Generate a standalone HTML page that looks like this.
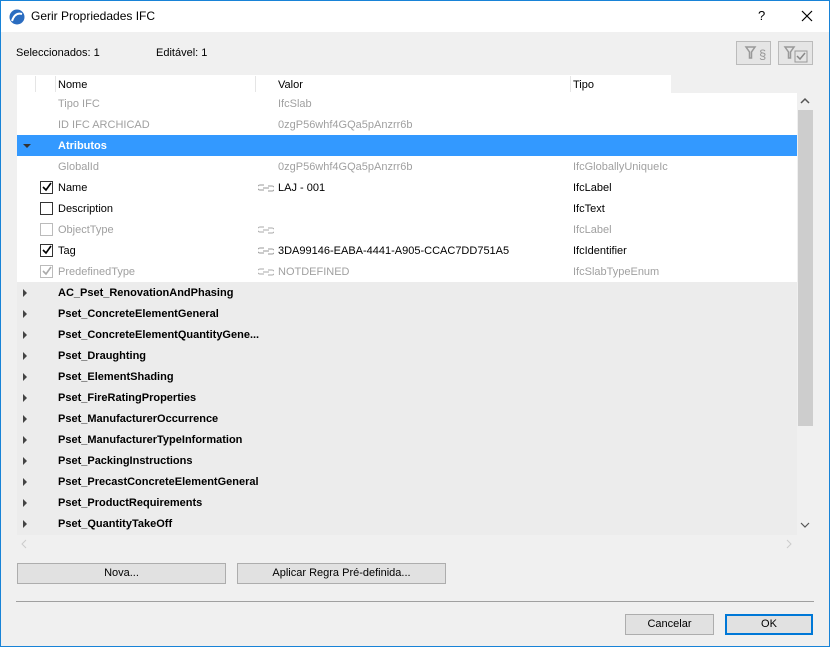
<!DOCTYPE html>
<html><head><meta charset="utf-8"><style>
*{box-sizing:border-box;margin:0;padding:0}
body{width:830px;height:647px;overflow:hidden;font-family:"Liberation Sans",sans-serif;font-size:11px;color:#000;background:#f0f0f0;position:relative}
.win{position:absolute;left:0;top:0;width:830px;height:647px;border:1px solid #1883d7;background:#f0f0f0}
.title{position:absolute;left:0;top:0;width:828px;height:31px;background:#fff}
.abs{position:absolute}
.row{position:absolute;left:16px;width:780px;height:21px;line-height:22px;white-space:nowrap}
.row span{position:absolute}
.g{color:#a0a0a0}
.b{font-weight:bold}
.cb{position:absolute;left:23px;top:4px;width:13px;height:13px;border:1px solid #333;background:#fff}
.cb.d{border-color:#bbb}
.tri{position:absolute;left:6px;top:7px;width:0;height:0;border-top:4px solid transparent;border-bottom:4px solid transparent;border-left:4px solid #444}
.btn{position:absolute;height:21px;border:1px solid #adadad;background:#e1e1e1;text-align:center;line-height:19px;font-size:11px}
.lk{position:absolute;left:241px;top:7px}
</style></head><body><div class="win">
<div class="title">
<svg class="abs" style="left:8px;top:8px" width="16" height="16" viewBox="0 0 16 16"><circle cx="8" cy="8" r="7.5" fill="#2a6cc0"/><path d="M3 12 Q6 3 13 5" stroke="#fff" stroke-width="2" fill="none"/></svg>
<div class="abs" style="left:30px;top:8px;font-size:12px">Gerir Propriedades IFC</div>
<div class="abs" style="left:757px;top:7px;font-size:13px">?</div>
<svg class="abs" style="left:800px;top:9px" width="12" height="12"><path d="M1 1L11 11M11 1L1 11" stroke="#000" stroke-width="1.2"/></svg>
</div>
<div class="abs" style="left:15px;top:46px">Seleccionados: 1</div>
<div class="abs" style="left:155px;top:46px">Editável: 1</div>
<div class="abs" style="left:735px;top:40px;width:35px;height:24px;border:1px solid #bbb;background:#e5e5e5"><svg width="33" height="22"><path d="M9 5h9l-3.5 5v6h-2v-6z" fill="none" stroke="#999" stroke-width="1.5"/><text x="22" y="17" font-size="13" fill="#999" font-family="Liberation Sans">§</text></svg></div>
<div class="abs" style="left:777px;top:40px;width:35px;height:24px;border:1px solid #bbb;background:#e5e5e5"><svg width="33" height="22"><path d="M6 5h9l-3.5 5v6h-2v-6z" fill="none" stroke="#999" stroke-width="1.5"/><rect x="16" y="9" width="12" height="11" fill="none" stroke="#999"/><path d="M18 14l3 3 5-6" stroke="#888" stroke-width="1.5" fill="none"/></svg></div>
<!-- header -->
<div class="abs" style="left:16px;top:74px;width:654px;height:18px;background:#fff"></div>
<div class="abs" style="left:34px;top:75px;width:1px;height:16px;background:#e5e5e5"></div>
<div class="abs" style="left:54px;top:75px;width:1px;height:16px;background:#e5e5e5"></div>
<div class="abs" style="left:254px;top:75px;width:1px;height:16px;background:#e5e5e5"></div>
<div class="abs" style="left:569px;top:75px;width:1px;height:16px;background:#e5e5e5"></div>
<div class="abs" style="left:57px;top:78px">Nome</div>
<div class="abs" style="left:277px;top:78px">Valor</div>
<div class="abs" style="left:572px;top:78px">Tipo</div>
<!-- list -->
<div class="abs" style="left:16px;top:92px;width:780px;height:189px;background:#fff"></div>
<div class="abs" style="left:16px;top:281px;width:780px;height:253px;background:#ececec"></div>
<div class="row" style="top:92px"><span class="g" style="left:41px">Tipo IFC</span><span class="g" style="left:261px">IfcSlab</span></div>
<div class="row" style="top:113px"><span class="g" style="left:41px">ID IFC ARCHICAD</span><span class="g" style="left:261px">0zgP56whf4GQa5pAnzrr6b</span></div>
<div class="row" style="top:134px;background:#3399ff;color:#fff"><span style="left:6px;top:9px;width:0;height:0;border-left:4px solid transparent;border-right:4px solid transparent;border-top:4px solid #333"></span><span class="b" style="left:41px">Atributos</span></div>
<div class="row" style="top:155px"><span class="g" style="left:41px">GlobalId</span><span class="g" style="left:261px">0zgP56whf4GQa5pAnzrr6b</span><span class="g" style="left:556px">IfcGloballyUniqueIc</span></div>
<div class="row" style="top:176px"><div class="cb"><svg width="11" height="11" style="position:absolute;top:0;left:0"><path d="M2 5l3 3 5-7" stroke="#000" stroke-width="1.6" fill="none"/></svg></div><span style="left:41px">Name</span><svg class="lk" width="16" height="8"><path d="M6 1H2a2 2 0 0 0 0 5h4M10 2h4a2 2 0 0 1 0 5h-4M5 4h6" stroke="#999" fill="none"/></svg><span style="left:261px">LAJ - 001</span><span style="left:556px">IfcLabel</span></div>
<div class="row" style="top:197px"><div class="cb"></div><span style="left:41px">Description</span><span style="left:556px">IfcText</span></div>
<div class="row" style="top:218px"><div class="cb d"></div><span class="g" style="left:41px">ObjectType</span><svg class="lk" width="16" height="8"><path d="M6 1H2a2 2 0 0 0 0 5h4M10 2h4a2 2 0 0 1 0 5h-4M5 4h6" stroke="#aaa" fill="none"/></svg><span class="g" style="left:556px">IfcLabel</span></div>
<div class="row" style="top:239px"><div class="cb"><svg width="11" height="11" style="position:absolute;top:0;left:0"><path d="M2 5l3 3 5-7" stroke="#000" stroke-width="1.6" fill="none"/></svg></div><span style="left:41px">Tag</span><svg class="lk" width="16" height="8"><path d="M6 1H2a2 2 0 0 0 0 5h4M10 2h4a2 2 0 0 1 0 5h-4M5 4h6" stroke="#999" fill="none"/></svg><span style="left:261px">3DA99146-EABA-4441-A905-CCAC7DD751A5</span><span style="left:556px">IfcIdentifier</span></div>
<div class="row" style="top:260px"><div class="cb d"><svg width="11" height="11" style="position:absolute;top:0;left:0"><path d="M2 5l3 3 5-7" stroke="#aaa" stroke-width="1.6" fill="none"/></svg></div><span class="g" style="left:41px">PredefinedType</span><svg class="lk" width="16" height="8"><path d="M6 1H2a2 2 0 0 0 0 5h4M10 2h4a2 2 0 0 1 0 5h-4M5 4h6" stroke="#aaa" fill="none"/></svg><span class="g" style="left:261px">NOTDEFINED</span><span class="g" style="left:556px">IfcSlabTypeEnum</span></div>
<div class="row" style="top:281px"><div class="tri"></div><span class="b" style="left:41px">AC_Pset_RenovationAndPhasing</span></div>
<div class="row" style="top:302px"><div class="tri"></div><span class="b" style="left:41px">Pset_ConcreteElementGeneral</span></div>
<div class="row" style="top:323px"><div class="tri"></div><span class="b" style="left:41px">Pset_ConcreteElementQuantityGene...</span></div>
<div class="row" style="top:344px"><div class="tri"></div><span class="b" style="left:41px">Pset_Draughting</span></div>
<div class="row" style="top:365px"><div class="tri"></div><span class="b" style="left:41px">Pset_ElementShading</span></div>
<div class="row" style="top:386px"><div class="tri"></div><span class="b" style="left:41px">Pset_FireRatingProperties</span></div>
<div class="row" style="top:407px"><div class="tri"></div><span class="b" style="left:41px">Pset_ManufacturerOccurrence</span></div>
<div class="row" style="top:428px"><div class="tri"></div><span class="b" style="left:41px">Pset_ManufacturerTypeInformation</span></div>
<div class="row" style="top:449px"><div class="tri"></div><span class="b" style="left:41px">Pset_PackingInstructions</span></div>
<div class="row" style="top:470px"><div class="tri"></div><span class="b" style="left:41px">Pset_PrecastConcreteElementGeneral</span></div>
<div class="row" style="top:491px"><div class="tri"></div><span class="b" style="left:41px">Pset_ProductRequirements</span></div>
<div class="row" style="top:512px"><div class="tri"></div><span class="b" style="left:41px">Pset_QuantityTakeOff</span></div>
<!-- scrollbars -->
<div class="abs" style="left:796px;top:92px;width:16px;height:442px;background:#f0f0f0"></div>
<div class="abs" style="left:797px;top:109px;width:15px;height:316px;background:#cdcdcd"></div>
<svg class="abs" style="left:799px;top:96px" width="10" height="8"><path d="M1 6l4-4 4 4" stroke="#555" stroke-width="1.5" fill="none"/></svg>
<svg class="abs" style="left:799px;top:520px" width="10" height="8"><path d="M1 2l4 4 4-4" stroke="#555" stroke-width="1.2" fill="none"/></svg>
<svg class="abs" style="left:19px;top:538px" width="8" height="10"><path d="M6 1L2 5l4 4" stroke="#ccc" fill="none"/></svg>
<svg class="abs" style="left:784px;top:538px" width="8" height="10"><path d="M2 1l4 4-4 4" stroke="#ccc" fill="none"/></svg>
<div class="btn" style="left:16px;top:562px;width:209px">Nova...</div>
<div class="btn" style="left:236px;top:562px;width:209px">Aplicar Regra Pré-definida...</div>
<div class="abs" style="left:15px;top:600px;width:798px;height:1px;background:#a0a0a0"></div>
<div class="btn" style="left:624px;top:613px;width:89px">Cancelar</div>
<div class="btn" style="left:724px;top:613px;width:88px;border:2px solid #0078d7;line-height:17px">OK</div>
</div></body></html>
